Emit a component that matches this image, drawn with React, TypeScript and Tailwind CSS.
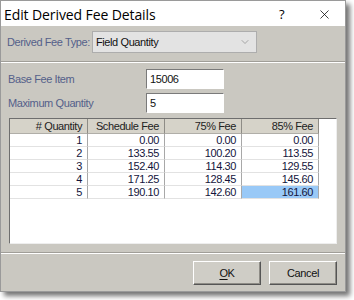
import { ChevronDown, X } from "lucide-react";

const rows = [
  ["1", "0.00", "0.00", "0.00"],
  ["2", "133.55", "100.20", "113.55"],
  ["3", "152.40", "114.30", "129.55"],
  ["4", "171.25", "128.45", "145.60"],
  ["5", "190.10", "142.60", "161.60"],
];

const headers = ["# Quantity", "Schedule Fee", "75% Fee", "85% Fee"];

export default function App() {
  return (
    <main className="h-[300px] w-[354px] overflow-hidden bg-white font-['Liberation_Sans',sans-serif] tracking-[-0.4px]">
      <div className="flex h-[292px] w-[346px] flex-col border border-[#9a9a9a] bg-[#cac8c1] shadow-[4px_4px_5px_rgba(0,0,0,0.55)]">
        <header className="flex h-[25px] shrink-0 items-center bg-white pl-[3px] pt-[2px] text-black">
          <span className="flex-1 whitespace-nowrap font-['Open_Sans',sans-serif] text-[14px] leading-none tracking-[-0.1px]">
            Edit Derived Fee Details
          </span>
          <span className="w-[24px] font-['Open_Sans',sans-serif] text-[13px] leading-none">?</span>
          <span className="flex w-[42px] items-center justify-center">
            <X className="h-[15px] w-[15px]" strokeWidth={1.2} aria-hidden="true" />
          </span>
        </header>

        <div className="flex items-center gap-[4px] px-[6px] pt-[5px] text-[11px] text-[#54608a]">
          <span className="w-[81px] whitespace-nowrap">Derived Fee Type:</span>
          <div className="flex h-[22px] w-[165px] items-center justify-between border border-[#adadad] bg-[#e3e3e3] pl-[3px] pr-[5px] text-[#111]">
            <span>Field Quantity</span>
            <ChevronDown className="h-[12px] w-[12px] text-[#666]" strokeWidth={1} aria-hidden="true" />
          </div>
        </div>

        <div className="mt-[8px] border-t border-b border-t-[#a09e98] border-b-white" />

        <div className="flex flex-col gap-[4px] px-[7px] pt-[6px] text-[11px] text-[#54608a]">
          <div className="flex items-center">
            <span className="w-[138px] whitespace-nowrap">Base Fee Item</span>
            <div className="flex h-[20px] w-[78px] items-center border border-t-[#7a7a7a] border-l-[#7a7a7a] border-b-white border-r-white bg-white pl-[3px] text-[#111]">
              15006
            </div>
          </div>
          <div className="flex items-center">
            <span className="w-[138px] whitespace-nowrap">Maximum Quantity</span>
            <div className="flex h-[20px] w-[78px] items-center border border-t-[#7a7a7a] border-l-[#7a7a7a] border-b-white border-r-white bg-white pl-[3px] text-[#111]">
              5
            </div>
          </div>
        </div>

        <div className="mx-[8px] mt-[5px] h-[126px] border border-t-[#6e6e6e] border-l-[#6e6e6e] border-b-[#eeeeee] border-r-[#eeeeee] bg-white text-[11px] text-[#14143c]">
          <div className="grid w-[309px] grid-cols-[78px_77px_77px_77px]">
            {headers.map((h) => (
              <div
                key={h}
                className="flex h-[15px] items-center justify-end whitespace-nowrap border-r border-b border-r-[#8e8c86] border-b-[#b0aea8] bg-[#d6d3c9] pr-[5px] leading-none text-[#222]"
              >
                {h}
              </div>
            ))}
            {rows.map((r) =>
              r.map((c, i) => (
                <div
                  key={r[0] + "-" + i}
                  className={
                    "flex h-[13px] items-center justify-end border-r border-b border-r-[#a8a8a8] border-b-[#e2e2e2] pr-[5px] leading-none " +
                    (r[0] === "5" && i === 3 ? "bg-[#99c9f7]" : "")
                  }
                >
                  {c}
                </div>
              ))
            )}
          </div>
        </div>

        <div className="mt-[8px] border-t border-b border-t-[#a09e98] border-b-white" />

        <div className="flex justify-end gap-[8px] pr-[8px] pt-[7px] text-[11px] text-[#111]">
          <button className="flex h-[24px] w-[68px] items-center justify-center border border-t-white border-l-white border-b-[#555] border-r-[#555] bg-[#cfcdc6] shadow-[inset_-1px_-1px_0_#8e8c86]">
            <span className="underline underline-offset-2">O</span>K
          </button>
          <button className="flex h-[24px] w-[68px] items-center justify-center border border-t-white border-l-white border-b-[#555] border-r-[#555] bg-[#cfcdc6] shadow-[inset_-1px_-1px_0_#8e8c86]">
            Cancel
          </button>
        </div>
      </div>
    </main>
  );
}
